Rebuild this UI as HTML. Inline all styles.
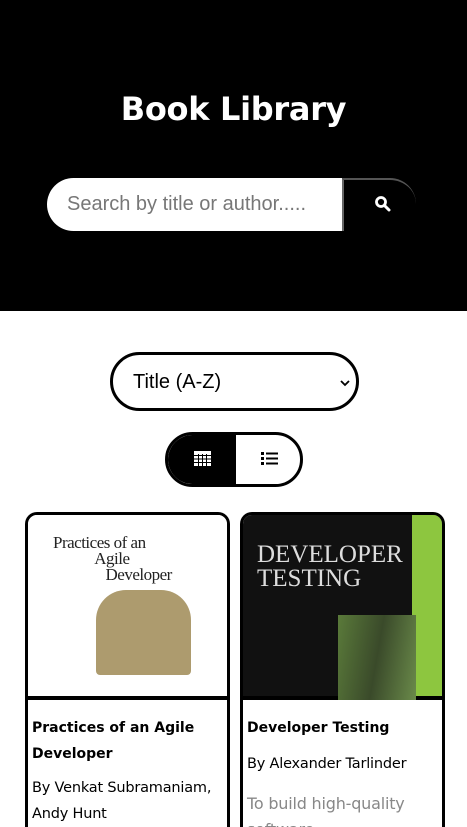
<!DOCTYPE html>
<html><head><style>
*{box-sizing:border-box;margin:0;padding:0}
html,body{width:467px;height:827px;overflow:hidden}
body{background:#fff;font-family:"Liberation Sans",sans-serif;position:relative}
.hdr{background:#000;height:311px;position:relative}
h1{position:absolute;top:90px;width:100%;text-align:center;color:#fff;font:bold 32px "DejaVu Sans",sans-serif;letter-spacing:-0.3px}
.inp{position:absolute;left:47px;top:178px;width:295px;height:53px;background:#fff;border-radius:27px 0 0 27px;color:#777;font-size:20px;padding:15px 0 0 20px}
.btn{position:absolute;left:342px;top:178px;width:74px;height:53px;border-left:2px solid #666;border-top:2px solid #555;border-radius:0 26px 0 0}
.sel{position:absolute;left:110px;top:352px;width:249px;height:59px;border:3px solid #000;border-radius:30px;font-size:20px;padding:16px 0 0 20px}
.tog{position:absolute;left:165px;top:432px;width:138px;height:55px;border:3px solid #000;border-radius:28px;overflow:hidden}
.tog .l{position:absolute;left:0;top:0;width:68px;height:100%;background:#000}
.card{position:absolute;top:512px;width:205px;height:330px;border:3px solid #000;border-bottom:none;border-radius:12px 12px 0 0;overflow:hidden}
.img{height:185px;border-bottom:4px solid #000}
.t{font:bold 14px "DejaVu Sans",sans-serif;line-height:26px;padding:1px 4px 0 4px;margin-top:14px}
.a{font:14.5px "DejaVu Sans",sans-serif;line-height:26px;padding:0 4px;letter-spacing:-0.2px}
</style></head><body>
<div class="hdr">
<h1>Book Library</h1>
<div class="inp">Search by title or author.....</div>
<div class="btn"><svg style="position:absolute;left:30px;top:15px" width="18" height="18" viewBox="0 0 18 18"><circle cx="7" cy="7" r="4.5" fill="none" stroke="#fff" stroke-width="2.8"/><path d="M10.5 10.5L15 15" stroke="#fff" stroke-width="3" stroke-linecap="round"/></svg></div>
</div>
<div class="sel">Title (A-Z)<svg style="position:absolute;right:6px;top:24px" width="10" height="8" viewBox="0 0 10 8"><path d="M1 2L5 6L9 2" fill="none" stroke="#000" stroke-width="1.8"/></svg></div>
<div class="tog"><div class="l"></div>
<svg style="position:absolute;left:26px;top:16px" width="17" height="15"><rect width="17" height="15" fill="#fff"/><g stroke="#000" stroke-width="1"><path d="M0 4.5H17M0 8H17M0 11.5H17M4.5 3V15M8.5 3V15M12.5 3V15"/></g></svg>
<svg style="position:absolute;left:93px;top:16px" width="17" height="15"><g fill="#000"><rect x="0" y="1" width="3" height="3"/><rect x="0" y="6" width="3" height="3"/><rect x="0" y="11" width="3" height="3"/><rect x="5" y="1.5" width="12" height="2"/><rect x="5" y="6.5" width="12" height="2"/><rect x="5" y="11.5" width="12" height="2"/></g></svg>
</div>
<div class="card" style="left:25px">
<div class="img" style="background:#fff;position:relative">
<div style="position:absolute;left:25px;top:20px;font:17px 'Liberation Serif',serif;color:#222;line-height:16px;letter-spacing:-0.5px">Practices of an<br>&nbsp;&nbsp;&nbsp;&nbsp;&nbsp;&nbsp;&nbsp;&nbsp;&nbsp;&nbsp;&nbsp;Agile<br>&nbsp;&nbsp;&nbsp;&nbsp;&nbsp;&nbsp;&nbsp;&nbsp;&nbsp;&nbsp;&nbsp;&nbsp;&nbsp;&nbsp;Developer</div>
<div style="position:absolute;left:68px;top:75px;width:95px;height:85px;background:#8a7030;border-radius:30px 30px 4px 4px;opacity:.7"></div>
</div>
<div class="t">Practices of an Agile Developer</div>
<div class="a" style="margin-top:8px">By Venkat Subramaniam, Andy Hunt</div>
</div>
<div class="card" style="left:240px">
<div class="img" style="background:#111;position:relative">
<div style="position:absolute;right:0;top:0;width:30px;height:100%;background:#8dc63f"></div>
<div style="position:absolute;left:95px;top:100px;width:78px;height:85px;background:linear-gradient(100deg,#5a7a3a,#3a4a2a,#6a8a4a)"></div>
<div style="position:absolute;left:14px;top:28px;font:25px 'Liberation Serif',serif;color:#ddd;line-height:24px">DEVELOPER<br>TESTING</div>
</div>
<div class="t">Developer Testing</div>
<div class="a" style="margin-top:10px">By Alexander Tarlinder</div>
<div class="a" style="margin-top:14px;color:#888;font-size:16px">To build high-quality software</div>
</div>
</body></html>
